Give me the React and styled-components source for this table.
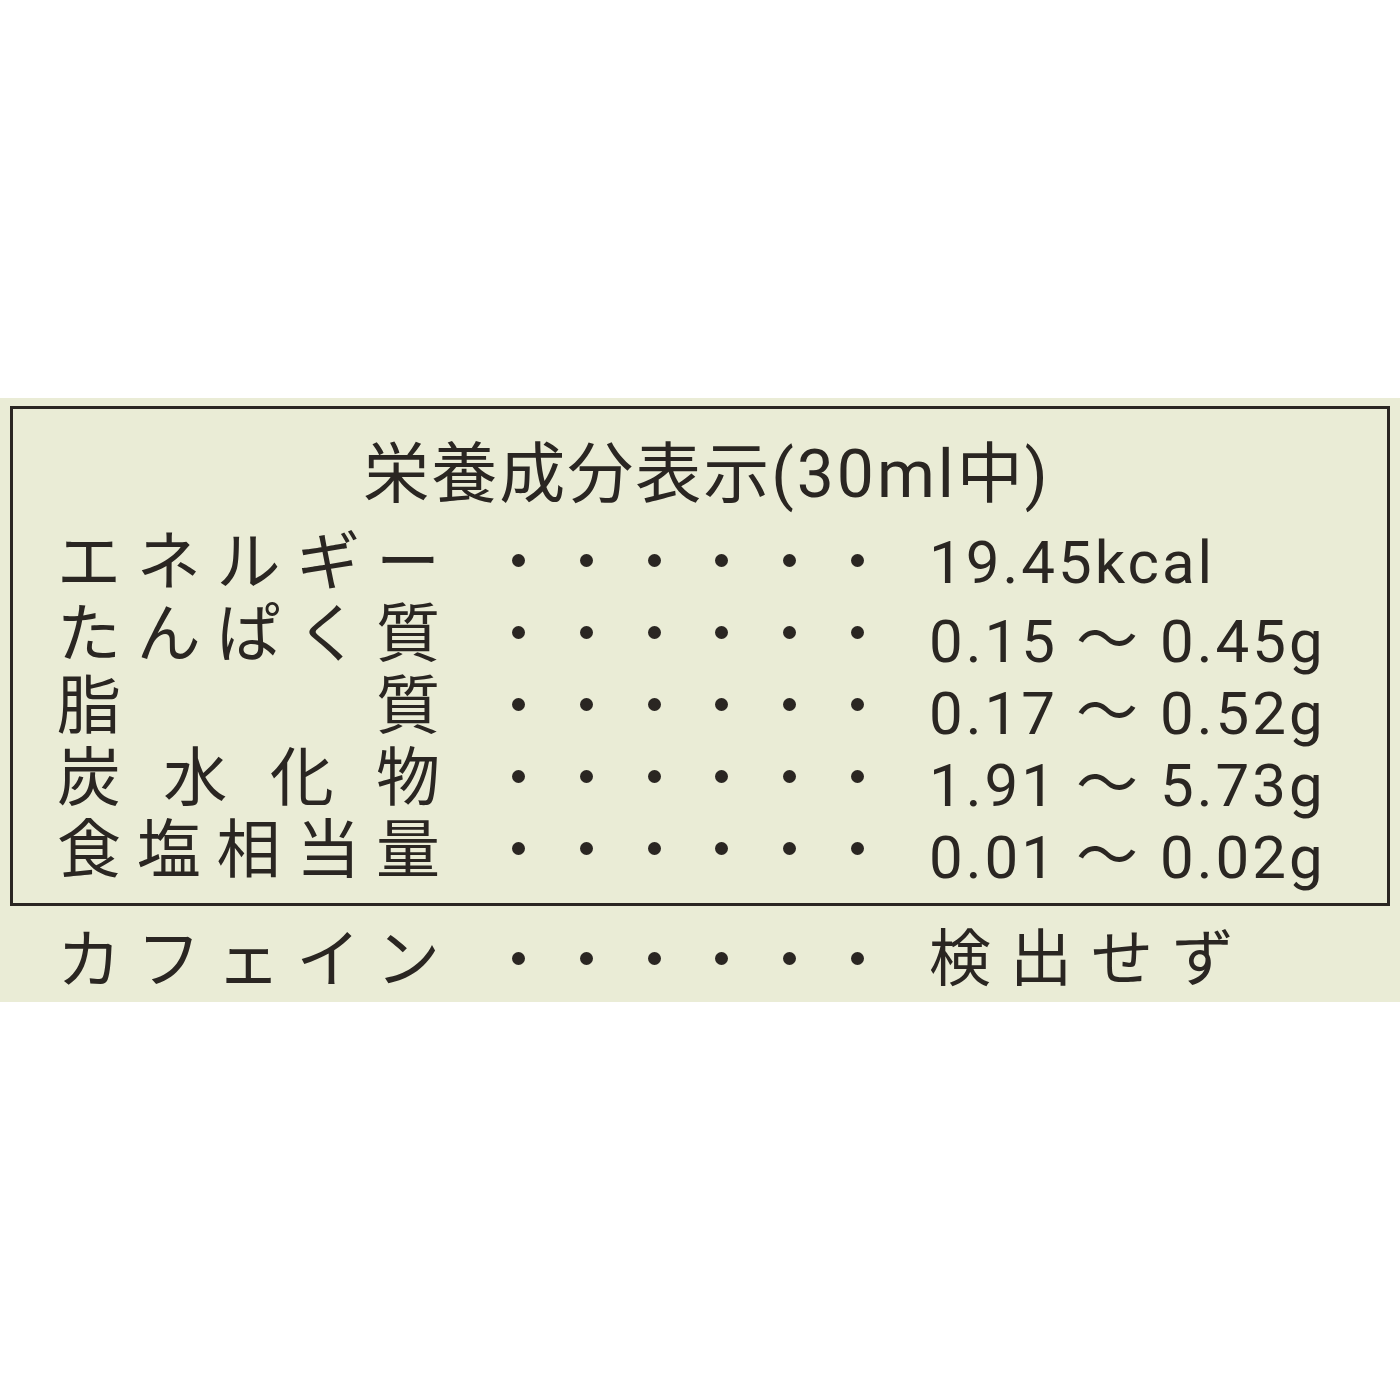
import React from 'react';
import styled, { createGlobalStyle } from 'styled-components';

const ink = '#2a2622';
const paper = '#eaecd6';
const jp = '"Noto Sans CJK JP", "Noto Sans", sans-serif';
const latin = 'Roboto, "Noto Sans CJK JP", sans-serif';

const Global = createGlobalStyle`
  html, body {
    margin: 0;
    padding: 0;
    background: #ffffff;
  }
`;

const nutrients = [
  { label: 'エネルギー', value: ['19.45kcal'] },
  { label: 'たんぱく質', value: ['0.15', '0.45g'] },
  { label: '脂質', value: ['0.17', '0.52g'] },
  { label: '炭水化物', value: ['1.91', '5.73g'] },
  { label: '食塩相当量', value: ['0.01', '0.02g'] },
];

function App() {
  return (
    <Page>
      <Global />
      <Panel>
        <Box>
          <Title>栄養成分表示<Paren>(30ml</Paren>中<Paren>)</Paren></Title>
          {nutrients.map((n) => (
            <Row key={n.label}>
              <Label>
                {[...n.label].map((ch, i) => <span key={i}>{ch}</span>)}
              </Label>
              <Leader>
                {Array.from({ length: 6 }).map((_, i) => <Dot key={i} />)}
              </Leader>
              <Value>
                {n.value[0]}
                {n.value[1] && (
                  <>
                    <Wave>〜</Wave>
                    {n.value[1]}
                  </>
                )}
              </Value>
            </Row>
          ))}
        </Box>
        <Row $outside>
          <Label>
            {[...'カフェイン'].map((ch, i) => <span key={i}>{ch}</span>)}
          </Label>
          <Leader>
            {Array.from({ length: 6 }).map((_, i) => <Dot key={i} />)}
          </Leader>
          <Note>検出せず</Note>
        </Row>
      </Panel>
    </Page>
  );
}

export default App;

const Page = styled.div`
  padding-top: 398px;
  width: 1400px;
`;

const Panel = styled.section`
  background: ${paper};
  padding: 8px 10px 12px;
  color: ${ink};
`;

const Box = styled.div`
  border: 3px solid ${ink};
  padding: 26px 0 23px;
`;

const Title = styled.h1`
  margin: 0 0 19px;
  padding-left: 14px;
  height: 66px;
  text-align: center;
  font-family: ${jp};
  font-weight: 400;
  font-size: 66px;
  line-height: 66px;
  letter-spacing: 2px;
`;

const Paren = styled.span`
  font-family: ${latin};
  font-size: 66px;
  letter-spacing: 3px;
`;

const Row = styled.div`
  display: flex;
  align-items: flex-start;
  height: 72px;
  padding-left: ${(p) => (p.$outside ? '47px' : '44px')};
  margin-top: ${(p) => (p.$outside ? '12px' : '0')};
`;

const Label = styled.div`
  width: 383px;
  height: 72px;
  display: flex;
  justify-content: space-between;
  font-family: ${jp};
  font-size: 64px;
  line-height: 72px;
`;

const Leader = styled.div`
  width: 352px;
  margin-left: 72px;
  height: 72px;
  display: flex;
  align-items: center;
  justify-content: space-between;
  padding-top: 8px;
  box-sizing: border-box;
`;

const Dot = styled.span`
  width: 13px;
  height: 13px;
  border-radius: 50%;
  background: ${ink};
`;

const Value = styled.div`
  margin-left: 65px;
  padding-top: 7px;
  height: 65px;
  font-family: ${latin};
  font-size: 60px;
  line-height: 72px;
  letter-spacing: 3px;
  white-space: nowrap;
`;

const Wave = styled.span`
  font-family: ${jp};
  font-size: 62px;
  letter-spacing: 0;
  margin: 0 22px 0 18px;
`;

const Note = styled.div`
  margin-left: 65px;
  font-family: ${jp};
  font-size: 62px;
  line-height: 72px;
  letter-spacing: 19px;
`;
